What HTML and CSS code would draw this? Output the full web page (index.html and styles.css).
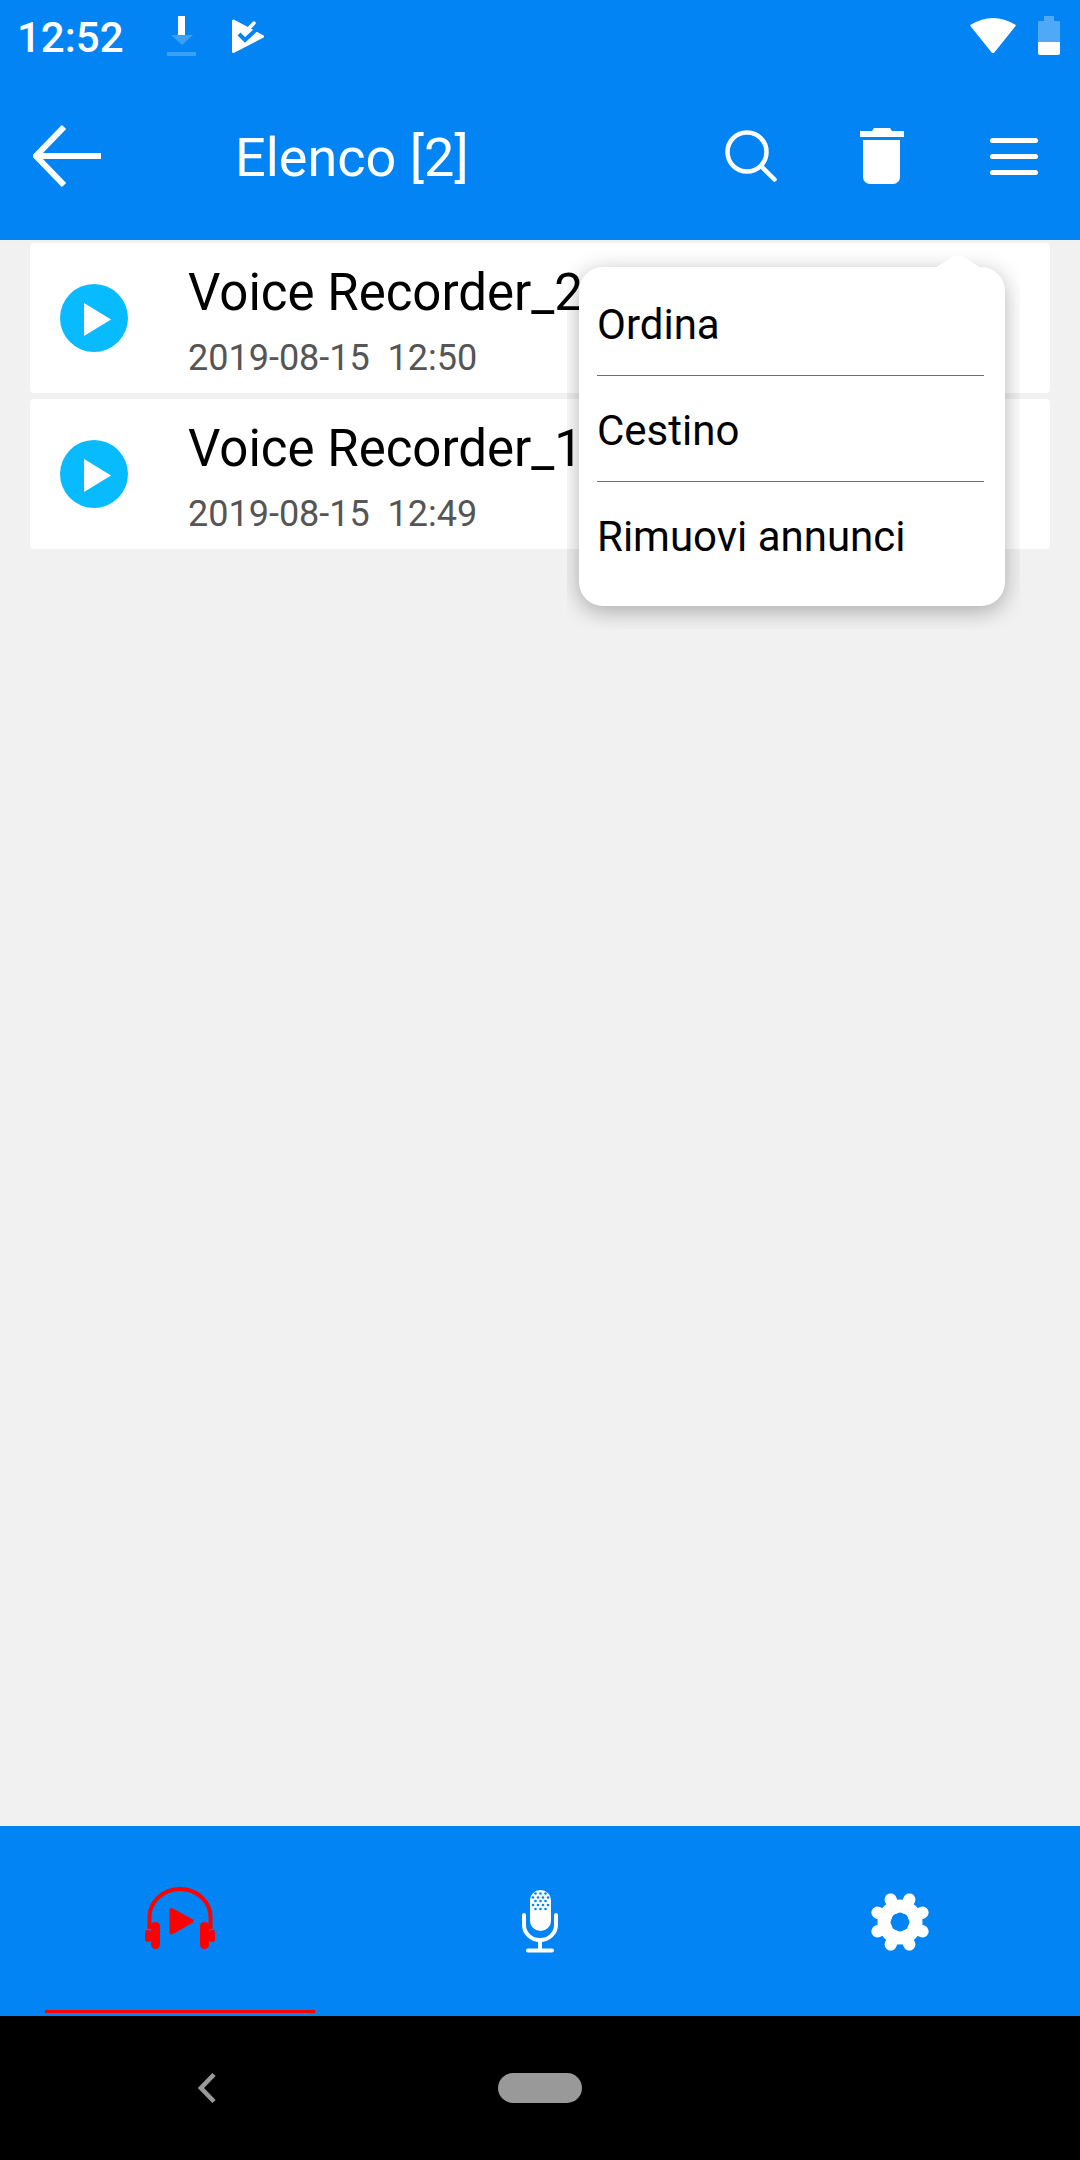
FILE: index.html
```html
<!DOCTYPE html>
<html lang="en">
<head>
    <meta charset="UTF-8">
    <meta name="viewport" content="width=device-width, initial-scale=1.0">
    <title>Elenco</title>
    <link rel="stylesheet" href="styles.css">
</head>
<body>
    <div class="app">
        <div class="header">
            <div class="status-bar">
                <span class="clock">12:52</span>
                <svg class="status-download" width="29" height="40" viewBox="0 0 29 40">
                    <rect x="11" y="0" width="7" height="19" fill="#fff"/>
                    <path d="M4 19h22l-11 10z" fill="#fff" opacity="0.22"/>
                    <rect x="0" y="36" width="29" height="4" fill="#fff" opacity="0.22"/>
                </svg>
                <svg class="status-store" width="32" height="34" viewBox="0 0 32 34">
                    <path d="M1.500 2L30.500 17.500 1.500 32.500z" fill="#fff" stroke="#fff" stroke-width="3" stroke-linejoin="round"/>
                    <path d="M7 15l6 6L27 8" fill="none" stroke="#0384f4" stroke-width="4"/>
                    <path d="M13 13.500L22 4" fill="none" stroke="#fff" stroke-width="3.500" stroke-linecap="round"/>
                </svg>
                <span class="status-spacer"></span>
                <svg class="status-wifi" width="46" height="36" viewBox="0 0 46 36">
                    <path d="M1 8.500Q23-5 45 8.500L23 36z" fill="#fff" stroke="#fff" stroke-width="1.500" stroke-linejoin="round"/>
                </svg>
                <svg class="status-battery" width="22" height="39" viewBox="0 0 22 39">
                    <path d="M6 0h10v5h5a1 1 0 0 1 1 1v20H0V6a1 1 0 0 1 1-1h5z" fill="#fff" opacity="0.3"/>
                    <path d="M0 26h22v11a2 2 0 0 1-2 2H2a2 2 0 0 1-2-2z" fill="#fff"/>
                </svg>
            </div>
            <div class="toolbar">
                <svg class="back-arrow" width="68" height="62" viewBox="0 0 68 62">
                    <path d="M31 2L3 31l28 29M3 31h65" fill="none" stroke="#fff" stroke-width="6"/>
                </svg>
                <h1 class="page-title">Elenco [2]</h1>
                <svg class="tool-search" width="52" height="52" viewBox="0 0 52 52">
                    <circle cx="22" cy="22" r="19.500" fill="none" stroke="#fff" stroke-width="4.500"/>
                    <path d="M36 36l13.500 13.500" stroke="#fff" stroke-width="4.500" stroke-linecap="round"/>
                </svg>
                <svg class="tool-trash" width="44" height="56" viewBox="0 0 44 56">
                    <path d="M0 3h12l2-3h16l2 3h12v6H0z" fill="#fff"/>
                    <path d="M3 12h37v37a7 7 0 0 1-7 7H10a7 7 0 0 1-7-7z" fill="#fff"/>
                </svg>
                <div class="tool-menu">
                    <span></span>
                    <span></span>
                    <span></span>
                </div>
            </div>
        </div>

        <div class="list">
            <div class="record">
                <svg class="record-play" width="68" height="68" viewBox="0 0 68 68">
                    <circle cx="34" cy="34" r="34" fill="#08bbff"/>
                    <path d="M24 19l27 16.500-27 16.500z" fill="#fff"/>
                </svg>
                <div class="record-text">
                    <div class="record-name">Voice Recorder_2</div>
                    <div class="record-date">2019-08-15&nbsp;&nbsp;12:50</div>
                </div>
            </div>
            <div class="record">
                <svg class="record-play" width="68" height="68" viewBox="0 0 68 68">
                    <circle cx="34" cy="34" r="34" fill="#08bbff"/>
                    <path d="M24 19l27 16.500-27 16.500z" fill="#fff"/>
                </svg>
                <div class="record-text">
                    <div class="record-name">Voice Recorder_1</div>
                    <div class="record-date">2019-08-15&nbsp;&nbsp;12:49</div>
                </div>
            </div>

            <div class="popup-clip">
                <div class="popup">
                    <svg class="popup-notch" width="46" height="13" viewBox="0 0 46 13">
                        <path d="M0 13L17 2q6-4 12 0l17 11z" fill="#fff"/>
                    </svg>
                    <div class="popup-item">Ordina</div>
                    <div class="popup-item">Cestino</div>
                    <div class="popup-item">Rimuovi annunci</div>
                </div>
            </div>
        </div>

        <div class="bottom-nav">
            <div class="nav-tab active">
                <svg width="70" height="62" viewBox="0 0 70 62">
                    <path d="M4.500 42V30a30.500 28 0 0 1 61 0v12" fill="none" stroke="#f00" stroke-width="4"/>
                    <rect x="0" y="43" width="6" height="12" rx="2.500" fill="#f00"/>
                    <rect x="6" y="35" width="9" height="27" rx="4.500" fill="#f00"/>
                    <rect x="55" y="35" width="9" height="27" rx="4.500" fill="#f00"/>
                    <rect x="64" y="43" width="6" height="12" rx="2.500" fill="#f00"/>
                    <path d="M26.500 23l20 11-20 11.500z" fill="#f00" stroke="#f00" stroke-width="4" stroke-linejoin="round"/>
                </svg>
            </div>
            <div class="nav-tab">
                <svg width="36" height="63" viewBox="0 0 36 63">
                    <path d="M8 10a10.500 10 0 0 1 21 0v21a10.500 10 0 0 1-21 0z" fill="#fff"/>
                    <g fill="#0384f4">
                        <circle cx="13.500" cy="3.500" r="1.300"/><circle cx="18.500" cy="3.500" r="1.300"/><circle cx="23.500" cy="3.500" r="1.300"/>
                        <circle cx="11" cy="7.500" r="1.300"/><circle cx="16" cy="7.500" r="1.300"/><circle cx="21" cy="7.500" r="1.300"/><circle cx="26" cy="7.500" r="1.300"/>
                        <circle cx="13.500" cy="11" r="1.300"/><circle cx="18.500" cy="11" r="1.300"/><circle cx="23.500" cy="11" r="1.300"/>
                        <circle cx="11" cy="15" r="1.300"/><circle cx="16" cy="15" r="1.300"/><circle cx="21" cy="15" r="1.300"/><circle cx="26" cy="15" r="1.300"/>
                        <circle cx="13.500" cy="19" r="1.300"/><circle cx="18.500" cy="19" r="1.300"/><circle cx="23.500" cy="19" r="1.300"/>
                    </g>
                    <path d="M2 25v10a16 15 0 0 0 32 0V25" fill="none" stroke="#fff" stroke-width="4" stroke-linecap="round"/>
                    <path d="M18 50v10M6 60.500h24" fill="none" stroke="#fff" stroke-width="4" stroke-linecap="round"/>
                </svg>
            </div>
            <div class="nav-tab">
                <svg width="58" height="58" viewBox="-29 -29 58 58">
                    <g stroke="#fff" stroke-width="12" stroke-linecap="round">
                        <path d="M5.700 13.800L9.400 22.600M13.800 5.700L22.600 9.400M13.800 -5.700L22.600 -9.400M5.700 -13.800L9.400 -22.600M-5.700 -13.800L-9.400 -22.600M-13.800 -5.700L-22.600 -9.400M-13.800 5.700L-22.600 9.400M-5.700 13.800L-9.400 22.600"/>
                    </g>
                    <circle r="16" fill="none" stroke="#fff" stroke-width="13"/>
                </svg>
            </div>
        </div>

        <div class="system-nav">
            <svg class="system-back" width="18" height="30" viewBox="0 0 18 30">
                <path d="M16 1.500L3 15l13 13.500" fill="none" stroke="#999" stroke-width="4.500"/>
            </svg>
            <div class="system-home"></div>
        </div>
    </div>
</body>
</html>
```

FILE: styles.css
```css
* {
    box-sizing: border-box;
}

body {
    margin: 0;
    font-family: 'Roboto', sans-serif;
    background: #000000;
}

.app {
    width: 1080px;
    height: 2160px;
    display: flex;
    flex-direction: column;
    background: #f1f1f1;
}

.header {
    height: 240px;
    background: #0384f4;
    color: #ffffff;
}

.status-bar {
    height: 72px;
    padding: 16px 20px 0 17px;
    display: flex;
    align-items: flex-start;
}

.clock {
    font-size: 42px;
    font-weight: 500;
    line-height: 42px;
    margin-top: 1px;
}

.status-download {
    margin-left: 43px;
}

.status-store {
    margin-left: 36px;
    margin-top: 3px;
}

.status-spacer {
    flex: 1;
}

.status-wifi {
    margin-top: 1px;
}

.status-battery {
    margin-left: 22px;
}

.toolbar {
    height: 168px;
    padding-left: 33px;
    display: flex;
    align-items: center;
    position: relative;
}

.back-arrow {
    margin-top: -1px;
}

.page-title {
    margin: 4px 0 0 134px;
    font-size: 54px;
    font-weight: 400;
    line-height: 64px;
    width: 490px;
}

.tool-search {
    margin-top: -1px;
}

.tool-trash {
    margin-left: 83px;
    margin-top: 0;
}

.tool-menu {
    margin-left: 86px;
    width: 48px;
    display: flex;
    flex-direction: column;
    gap: 11px;
}

.tool-menu span {
    height: 5px;
    border-radius: 3px;
    background: #ffffff;
}

.list {
    flex: 1;
    padding: 3px 30px 0;
    display: flex;
    flex-direction: column;
    gap: 6px;
    position: relative;
}

.record {
    height: 150px;
    background: #ffffff;
    border-radius: 4px;
    padding-left: 30px;
    display: flex;
    align-items: center;
}

.record-text {
    margin: 7px 0 0 60px;
}

.record-name {
    font-size: 51px;
    line-height: 58px;
    color: #000000;
}

.record-date {
    font-size: 36px;
    line-height: 42px;
    margin-top: 15px;
    color: #555555;
}

/* the shadow is cut off square, like the nine-patch on the device */
.popup-clip {
    position: absolute;
    left: 567px;
    top: 3px;
    width: 453px;
    height: 386px;
    padding: 24px 15px 22px 12px;
    overflow: hidden;
}

.popup {
    height: 339px;
    padding: 3px 21px 0 18px;
    position: relative;
    background: #ffffff;
    border-radius: 24px;
    box-shadow: 0 5px 22px rgba(0, 0, 0, 0.3);
}

.popup-notch {
    position: absolute;
    left: 356px;
    top: -12px;
}

.popup-item {
    height: 106px;
    font-size: 42px;
    line-height: 46px;
    padding-top: 32px;
    color: #000000;
    border-bottom: 1px solid #707070;
}

.popup-item:last-child {
    border-bottom: none;
}

.bottom-nav {
    height: 190px;
    background: #0384f4;
    display: flex;
}

.nav-tab {
    flex: 1;
    height: 187px;
    display: flex;
    align-items: center;
    justify-content: center;
    margin: 0 45px;
    padding-top: 4px;
}

.nav-tab.active {
    padding-top: 0;
    border-bottom: 3px solid #ff0000;
}

.system-nav {
    height: 144px;
    background: #000000;
    position: relative;
    display: flex;
    align-items: center;
    justify-content: center;
}

.system-back {
    position: absolute;
    left: 198px;
    top: 57px;
}

.system-home {
    width: 84px;
    height: 30px;
    border-radius: 15px;
    background: #999999;
}
```
